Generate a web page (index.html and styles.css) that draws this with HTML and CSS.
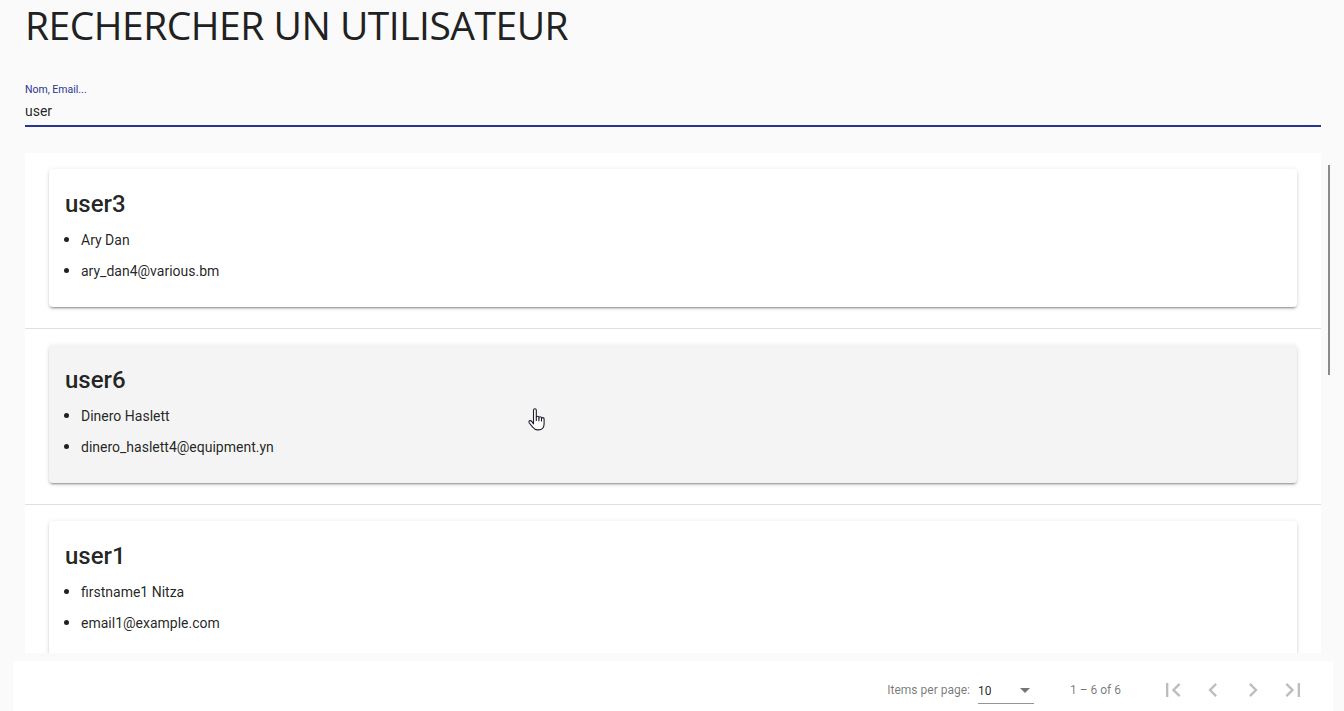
FILE: index.html
```html
<!DOCTYPE html>
<html lang="fr">
<head>
<meta charset="utf-8">
<title>Rechercher un utilisateur</title>
<link rel="stylesheet" href="styles.css">
</head>
<body>
<div class="page">
  <h1 class="title">RECHERCHER UN UTILISATEUR</h1>
  <div class="field">
    <label class="field-label">Nom, Email...</label>
    <div class="field-value">user</div>
    <div class="field-line"></div>
  </div>
  <div class="list-wrap">
    <div class="list">
      <div class="item">
        <div class="card">
          <h2 class="card-title">user3</h2>
          <ul class="card-list">
            <li>Ary Dan</li>
            <li>ary_dan4@various.bm</li>
          </ul>
        </div>
      </div>
      <div class="item">
        <div class="card card-hover">
          <h2 class="card-title">user6</h2>
          <ul class="card-list">
            <li>Dinero Haslett</li>
            <li>dinero_haslett4@equipment.yn</li>
          </ul>
        </div>
      </div>
      <div class="item">
        <div class="card">
          <h2 class="card-title">user1</h2>
          <ul class="card-list">
            <li>firstname1 Nitza</li>
            <li>email1@example.com</li>
          </ul>
        </div>
      </div>
    </div>
    <div class="scrollbar"></div>
    <svg class="cursor" width="20" height="26" viewBox="0 0 20 26">
      <path d="M5.5 2.2c0-.9.6-1.5 1.4-1.5s1.4.6 1.4 1.5v7.3c0-.8.6-1.3 1.3-1.3s1.3.5 1.3 1.3v.6c0-.8.6-1.3 1.3-1.3s1.3.5 1.3 1.3v.8c0-.8.6-1.3 1.3-1.3s1.3.5 1.3 1.3v5.2c0 3.4-2.3 5.8-5.6 5.8h-1.1c-2.1 0-3.4-1-4.5-2.6L1.3 15c-.6-.9-.4-1.8.3-2.2.7-.4 1.5-.2 2.1.6l1.8 2.4z" fill="#fff" stroke="#1b1b2b" stroke-width="1.1" stroke-linejoin="round"/>
      <path d="M8.3 9.5v3.6M10.9 10.1v3.2M13.5 10.9v2.6" stroke="#1b1b2b" stroke-width="1.1" fill="none"/>
    </svg>
  </div>
  <div class="paginator">
    <span class="pg-label">Items per page:</span>
    <div class="pg-select">
      <span class="pg-value">10</span>
      <span class="pg-arrow"></span>
    </div>
    <span class="pg-range">1 – 6 of 6</span>
    <div class="pg-buttons">
      <button class="pg-btn" aria-label="First page"><svg viewBox="0 0 24 24" class="pg-icon"><path d="M18.41 16.59L13.82 12l4.59-4.59L17 6l-6 6 6 6zM6 6h2v12H6z"/></svg></button>
      <button class="pg-btn" aria-label="Previous page"><svg viewBox="0 0 24 24" class="pg-icon"><path d="M15.41 7.41L14 6l-6 6 6 6 1.41-1.41L10.83 12z"/></svg></button>
      <button class="pg-btn" aria-label="Next page"><svg viewBox="0 0 24 24" class="pg-icon"><path d="M10 6L8.59 7.41 13.17 12l-4.58 4.59L10 18l6-6z"/></svg></button>
      <button class="pg-btn" aria-label="Last page"><svg viewBox="0 0 24 24" class="pg-icon"><path d="M5.59 7.41L10.18 12l-4.59 4.59L7 18l6-6-6-6zM16 6h2v12h-2z"/></svg></button>
    </div>
  </div>
</div>
</body>
</html>
```

FILE: styles.css
```css
html, body {
  margin: 0;
  padding: 0;
  height: 100%;
  overflow: hidden;
  background: #fafafa;
  font-family: Roboto, "Liberation Sans", sans-serif;
  color: rgba(0, 0, 0, 0.87);
}

.page {
  display: flex;
  flex-direction: column;
  padding: 0 23px 0 25px;
}

.title {
  margin: 0;
  font-family: "Open Sans", sans-serif;
  font-weight: 400;
  font-size: 39px;
  line-height: 50px;
  color: #212121;
  letter-spacing: -0.5px;
}

.field {
  margin-top: 34px;
  display: flex;
  flex-direction: column;
}

.field-label {
  font-size: 10.5px;
  line-height: 12px;
  color: #283593;
}

.field-value {
  margin-top: 5px;
  font-size: 14px;
  line-height: 20px;
}

.field-line {
  margin-top: 4px;
  height: 2px;
  background: #283593;
}

.list-wrap {
  position: relative;
  margin-top: 26px;
}

.list {
  height: 500px;
  overflow: hidden;
  background: #fff;
}

.item {
  padding: 16px 24px 21px;
  border-bottom: 1px solid #e0e0e0;
}

.card {
  background: #fff;
  border-radius: 4px;
  padding: 19px 16px 16px;
  box-shadow: 0 3px 1px -2px rgba(0, 0, 0, 0.2), 0 2px 2px 0 rgba(0, 0, 0, 0.14), 0 1px 5px 0 rgba(0, 0, 0, 0.12);
  height: 138px;
  box-sizing: border-box;
}

.card-hover {
  background: #f4f4f4;
}

.card-title {
  margin: 0 0 10px;
  font-size: 24px;
  font-weight: 500;
  line-height: 32px;
}

.card-list {
  margin: 0;
  padding-left: 16px;
  font-size: 14px;
  line-height: 20px;
}

.card-list li {
  margin-bottom: 11px;
}

.card-list li::marker {
  font-size: 16px;
}

.scrollbar {
  position: absolute;
  left: 1303px;
  top: 12px;
  width: 2px;
  height: 210px;
  background: #8a8a8a;
}

.cursor {
  position: absolute;
  left: 503px;
  top: 255px;
}

.paginator {
  margin: 8px -12px 0;
  height: 56px;
  background: #fff;
  display: flex;
  align-items: center;
  justify-content: flex-end;
  padding: 2px 20px 0 8px;
  box-sizing: border-box;
  font-size: 12px;
  color: rgba(0, 0, 0, 0.54);
}

.pg-label {
  margin-right: 8px;
}

.pg-select {
  width: 56px;
  height: 24px;
  margin-top: 4px;
  box-sizing: border-box;
  border-bottom: 1px solid rgba(0, 0, 0, 0.42);
  display: flex;
  align-items: center;
  justify-content: space-between;
  padding-bottom: 2px;
}

.pg-value {
  color: rgba(0, 0, 0, 0.87);
}

.pg-arrow {
  width: 0;
  height: 0;
  border-left: 5px solid transparent;
  border-right: 5px solid transparent;
  border-top: 5px solid rgba(0, 0, 0, 0.54);
  margin-right: 4px;
}

.pg-range {
  margin: 0 32px 0 36px;
}

.pg-buttons {
  display: flex;
}

.pg-btn {
  width: 40px;
  height: 40px;
  border: none;
  background: transparent;
  padding: 0;
  display: flex;
  align-items: center;
  justify-content: center;
}

.pg-icon {
  width: 28px;
  height: 28px;
  fill: rgba(0, 0, 0, 0.26);
}
```
